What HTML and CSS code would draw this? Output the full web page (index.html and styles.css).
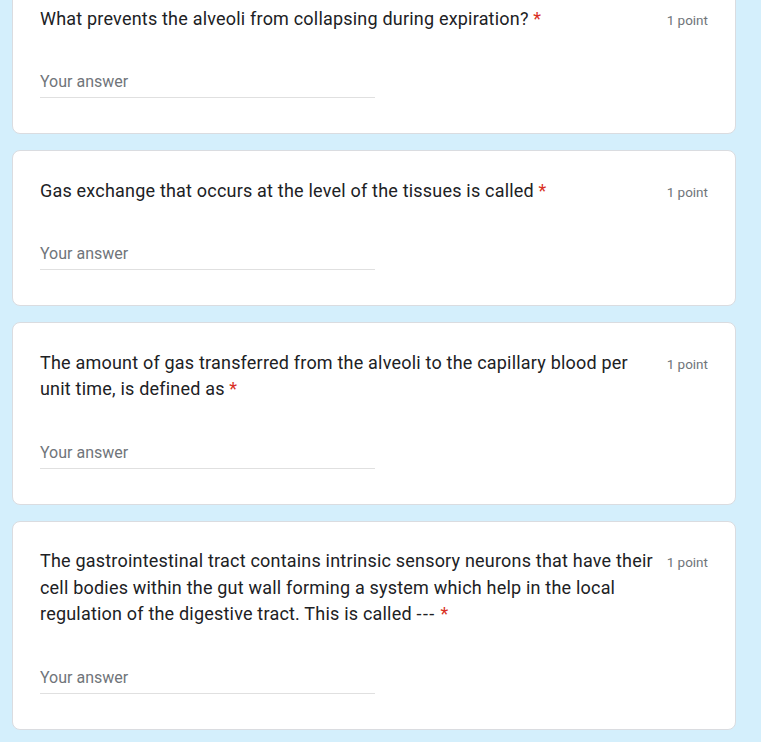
FILE: index.html
```html
<!DOCTYPE html>
<html>
<head>
<meta charset="utf-8">
<link rel="stylesheet" href="styles.css">
</head>
<body>
<div class="list">
  <div class="card first">
    <div class="head">
      <div class="title">What prevents the alveoli from collapsing during expiration? <span class="req">*</span></div>
      <div class="point">1 point</div>
    </div>
    <div class="answer">Your answer</div>
  </div>
  <div class="card">
    <div class="head">
      <div class="title">Gas exchange that occurs at the level of the tissues is called <span class="req">*</span></div>
      <div class="point">1 point</div>
    </div>
    <div class="answer">Your answer</div>
  </div>
  <div class="card">
    <div class="head">
      <div class="title">The amount of gas transferred from the alveoli to the capillary blood per unit time, is defined as <span class="req">*</span></div>
      <div class="point">1 point</div>
    </div>
    <div class="answer">Your answer</div>
  </div>
  <div class="card">
    <div class="head">
      <div class="title">The gastrointestinal tract contains intrinsic sensory neurons that have their cell bodies within the gut wall forming a system which help in the local regulation of the digestive tract. This is called <span class="dash">---</span> <span class="req">*</span></div>
      <div class="point">1 point</div>
    </div>
    <div class="answer">Your answer</div>
  </div>
</div>
</body>
</html>
```

FILE: styles.css
```css
html, body {
  margin: 0;
  padding: 0;
  background: #d4effc;
  overflow: hidden;
}
body {
  font-family: Roboto, "Liberation Sans", sans-serif;
  color: #202124;
}
.list {
  display: flex;
  flex-direction: column;
  gap: 16px;
  padding-left: 12px;
  width: 724px;
  margin-top: -22px;
}
.card {
  background: #fff;
  border: 1px solid #dadce0;
  border-radius: 8px;
  padding: 26.5px 26px 35px 27px;
}
.head {
  display: flex;
  align-items: baseline;
  gap: 5px;
}
.title {
  flex: 1;
  font-size: 18px;
  line-height: 26.5px;
  letter-spacing: 0.2px;
  font-variant-ligatures: none;
}
.dash {
  letter-spacing: 1.5px;
}
.req {
  color: #d93025;
}
.point {
  font-size: 13.5px;
  color: #70757a;
  white-space: nowrap;
  padding-right: 1px;
}
.answer {
  margin-top: 40px;
  width: 335px;
  font-size: 16px;
  line-height: 20px;
  color: #70757a;
  padding-bottom: 5px;
  border-bottom: 1px solid #e0e0e0;
}
```
